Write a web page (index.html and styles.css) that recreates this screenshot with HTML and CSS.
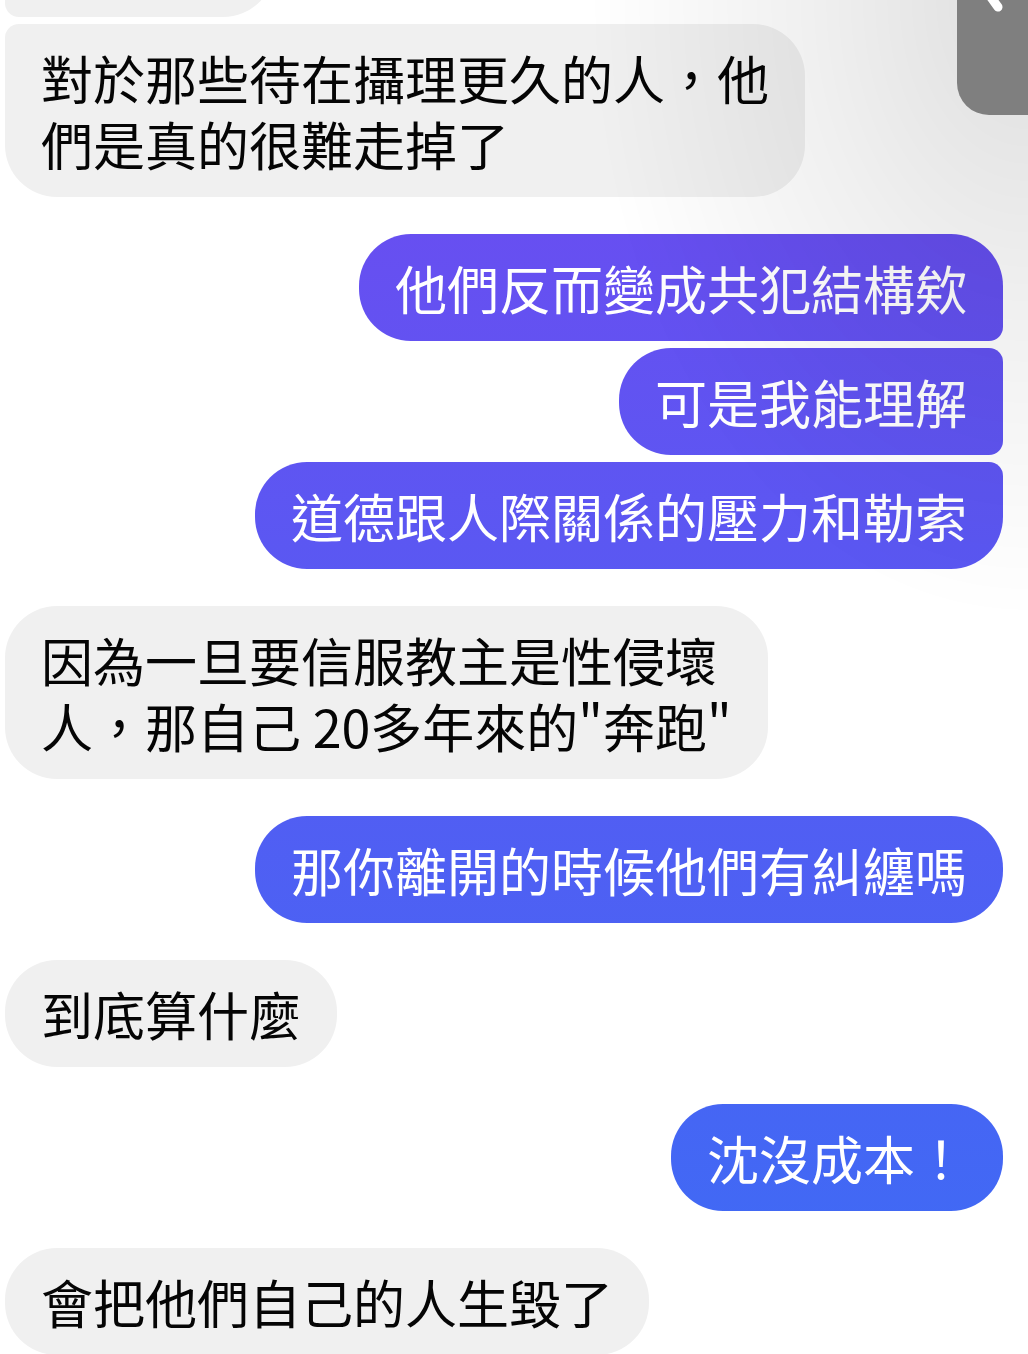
FILE: index.html
```html
<!DOCTYPE html>
<html lang="zh-Hant">
<head>
  <meta charset="UTF-8" />
  <meta name="viewport" content="width=device-width, initial-scale=1.0"/>
  <title>Chat</title>
  <link rel="stylesheet" href="styles.css">
</head>
<body>
  <div class="thread">
    <div class="group them">
      <div class="bubble mid earlier"></div>
      <div class="bubble last">對於那些待在攝理更久的人，他們是真的很難走掉了</div>
    </div>

    <div class="group me">
      <div class="bubble first">他們反而變成共犯結構欸</div>
      <div class="bubble mid">可是我能理解</div>
      <div class="bubble last">道德跟人際關係的壓力和勒索</div>
    </div>

    <div class="group them">
      <div class="bubble">因為一旦要信服教主是性侵壞<br>人，那自己 20多年來的"奔跑"</div>
    </div>

    <div class="group me">
      <div class="bubble">那你離開的時候他們有糾纏嗎</div>
    </div>

    <div class="group them">
      <div class="bubble">到底算什麼</div>
    </div>

    <div class="group me">
      <div class="bubble">沈沒成本！</div>
    </div>

    <div class="group them">
      <div class="bubble">會把他們自己的人生毀了</div>
    </div>
  </div>

  <div class="shade"></div>
  <div class="thumb">
    <svg viewBox="0 0 71 115" width="71" height="115">
      <line x1="33" y1="-4" x2="41" y2="7" stroke="#fff" stroke-width="9" stroke-linecap="round"/>
    </svg>
  </div>
</body>
</html>
```

FILE: styles.css
```css
html, body {
  margin: 0;
  height: 100%;
  overflow: hidden;
}

body {
  background: #fff;
  font-family: "Noto Sans CJK TC", "Noto Sans", sans-serif;
  font-size: 52px;
  line-height: 66px;
  color: #050505;
}

.thread {
  display: flex;
  flex-direction: column;
  gap: 37px;
  padding: 0 25px 0 5px;
  margin-top: -90px; /* scrolled position of the conversation */
}

.group {
  display: flex;
  flex-direction: column;
  gap: 7px;
}

.bubble {
  box-sizing: border-box;
  max-width: 800px;
  padding: 20.5px 36px;
  border-radius: 52px;
  word-break: break-all;
}

.them .bubble {
  align-self: flex-start;
  background: #f0f0f0;
}

.me .bubble {
  align-self: flex-end;
  color: #fff;
  background: linear-gradient(to bottom, #7049f0, #3c6cf5) fixed;
}

.bubble.earlier {
  width: 270px;
  height: 107px;
}

.them .first { border-bottom-left-radius: 14px; }
.them .mid { border-top-left-radius: 14px; border-bottom-left-radius: 14px; }
.them .last { border-top-left-radius: 14px; }

.me .first { border-bottom-right-radius: 14px; }
.me .mid { border-top-right-radius: 14px; border-bottom-right-radius: 14px; }
.me .last { border-top-right-radius: 14px; }

.shade {
  position: fixed;
  inset: 0;
  pointer-events: none;
  background: radial-gradient(ellipse 440px 620px at 100% 0,
              rgba(0, 0, 0, 0.13),
              rgba(0, 0, 0, 0.06) 50%,
              rgba(0, 0, 0, 0) 100%);
}

.thumb {
  position: fixed;
  top: 0;
  right: 0;
  width: 71px;
  height: 115px;
  background: #7f7f7f;
  border-bottom-left-radius: 32px;
  overflow: hidden;
}

.thumb svg {
  display: block;
}
```
